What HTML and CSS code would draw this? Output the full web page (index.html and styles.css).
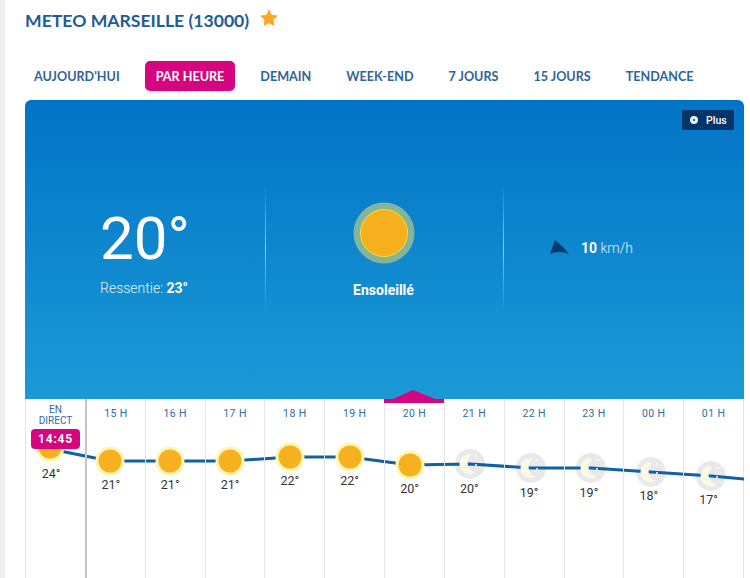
FILE: index.html

```html
<!DOCTYPE html>
<html lang="fr">
<head>
    <meta charset="UTF-8">
    <meta name="viewport" content="width=device-width, initial-scale=1.0">
    <title>Meteo Marseille (13000)</title>
    <link rel="stylesheet" href="styles.css">
</head>
<body>
    <div class="page">
        <div class="title-row">
            <h1>METEO MARSEILLE (13000)</h1>
            <svg class="star" width="18" height="18" viewBox="0 0 20 20"><path d="M10 1.200l2.700 5.700 6.200.8-4.500 4.300 1.100 6.200L10 15.200l-5.500 3 1.100-6.200L1.100 7.700l6.200-.8z" fill="#f9a825" stroke="#f9a825" stroke-width="1" stroke-linejoin="round"/></svg>
        </div>

        <nav class="tabs">
            <a class="tab">AUJOURD'HUI</a>
            <a class="tab active">PAR HEURE</a>
            <a class="tab">DEMAIN</a>
            <a class="tab">WEEK-END</a>
            <a class="tab">7 JOURS</a>
            <a class="tab">15 JOURS</a>
            <a class="tab">TENDANCE</a>
        </nav>

        <div class="card">
            <div class="hero">
                <a class="plus-btn"><span class="plus-dot"></span>Plus</a>
                <div class="hero-col temp-col">
                    <div class="temp-big">20°</div>
                    <div class="felt">Ressentie: <b>23°</b></div>
                </div>
                <div class="hero-col sky-col">
                    <svg width="62" height="62" viewBox="0 0 62 62">
                        <circle cx="31" cy="31" r="30.500" fill="#83b59c"/>
                        <circle cx="31" cy="31" r="23.500" fill="#f7b01d" stroke="#fbe21c" stroke-width="1"/>
                    </svg>
                    <div class="sky-label">Ensoleillé</div>
                </div>
                <div class="hero-col wind-col">
                    <svg width="20" height="15" viewBox="0 0 20 15"><path d="M0 14L5 0Q13 6 19 14Q9 10 0 14z" fill="#043c70"/></svg>
                    <div class="wind-text"><b>10</b> km/h</div>
                </div>
            </div>

            <div class="hours">
                <svg class="chart" width="719" height="179" viewBox="25 399 719 179">
                    <defs>
                        <g id="sun">
                            <circle r="14.500" fill="#fbf6b0"/>
                            <circle r="11.500" fill="#f5b120"/>
                        </g>
                        <g id="moon">
                            <path d="M2 -9.500A10 10 0 1 0 5 8.500A10 10 0 0 1 2 -9.500z" fill="#fdf9e3"/>
                            <circle cx="6" cy="-8" r="1" fill="white"/>
                            <circle cx="6" cy="1" r="1" fill="white"/>
                        </g>
                    </defs>
                    <g fill="#e9e9ea">
                        <circle cx="470" cy="464" r="15"/>
                        <circle cx="531" cy="468" r="15"/>
                        <circle cx="591" cy="468" r="15"/>
                        <circle cx="651" cy="472" r="15"/>
                        <circle cx="711" cy="476" r="15"/>
                    </g>
                    <polyline points="50,449 110,461 170,461 230,461 290,457 350,457 410,465 470,464 531,468 591,468 651,472 711,476 744,479" fill="none" stroke="#0f60a6" stroke-width="3"/>
                    <use href="#sun" x="50" y="447"/>
                    <use href="#sun" x="110" y="461"/>
                    <use href="#sun" x="170" y="461"/>
                    <use href="#sun" x="230" y="461"/>
                    <use href="#sun" x="290" y="457"/>
                    <use href="#sun" x="350" y="457"/>
                    <use href="#sun" x="410" y="465"/>
                    <use href="#moon" x="470" y="464"/>
                    <use href="#moon" x="531" y="468"/>
                    <use href="#moon" x="591" y="468"/>
                    <use href="#moon" x="651" y="472"/>
                    <use href="#moon" x="711" y="476"/>
                </svg>

                <div class="hour live">
                    <div class="hour-name">EN<br>DIRECT</div>
                    <div class="now-badge">14:45</div>
                    <div class="hour-temp" style="margin-top: 41px">24°</div>
                </div>
                <div class="hour"><div class="hour-name">15 H</div><div class="hour-temp" style="margin-top: 58px">21°</div></div>
                <div class="hour"><div class="hour-name">16 H</div><div class="hour-temp" style="margin-top: 58px">21°</div></div>
                <div class="hour"><div class="hour-name">17 H</div><div class="hour-temp" style="margin-top: 58px">21°</div></div>
                <div class="hour"><div class="hour-name">18 H</div><div class="hour-temp" style="margin-top: 54px">22°</div></div>
                <div class="hour"><div class="hour-name">19 H</div><div class="hour-temp" style="margin-top: 54px">22°</div></div>
                <div class="hour current">
                    <svg class="marker" width="60" height="14" viewBox="0 0 60 14"><path d="M0 14V10H9L29 1 51 10H60V14z" fill="#d6047f"/></svg>
                    <div class="hour-name">20 H</div><div class="hour-temp" style="margin-top: 62px">20°</div>
                </div>
                <div class="hour"><div class="hour-name">21 H</div><div class="hour-temp" style="margin-top: 62px">20°</div></div>
                <div class="hour"><div class="hour-name">22 H</div><div class="hour-temp" style="margin-top: 66px">19°</div></div>
                <div class="hour"><div class="hour-name">23 H</div><div class="hour-temp" style="margin-top: 66px">19°</div></div>
                <div class="hour"><div class="hour-name">00 H</div><div class="hour-temp" style="margin-top: 69px">18°</div></div>
                <div class="hour"><div class="hour-name">01 H</div><div class="hour-temp" style="margin-top: 73px">17°</div></div>
            </div>
        </div>
    </div>
</body>
</html>
```

FILE: styles.css

```css
html, body {
    margin: 0;
    padding: 0;
    height: 578px;
    overflow: hidden;
    background-color: white;
}

body {
    font-family: Roboto, Arial, sans-serif;
    border-left: 5px solid #eeeeee;
}

.page {
    padding-left: 20px;
    width: 719px;
}

.title-row {
    display: flex;
    align-items: center;
    gap: 11px;
    height: 40px;
}

h1 {
    margin: 0;
    font-family: Lato, Arial, sans-serif;
    font-size: 17.600px;
    font-weight: 700;
    color: #1f5c92;
}

.star {
    margin-top: -4px;
}

.tabs {
    display: flex;
    gap: 15px;
    margin-top: 21px;
    height: 30px;
    margin-left: -1px;
}

.tab {
    display: flex;
    align-items: center;
    padding: 0 10px;
    font-family: Lato, Arial, sans-serif;
    font-size: 12.600px;
    font-weight: 700;
    color: #2f6596;
    border-radius: 5px;
}

.tab.active {
    padding: 0 11px;
    background-color: #d6047f;
    color: white;
}

.card {
    margin-top: 9px;
}

.hero {
    position: relative;
    display: flex;
    height: 299px;
    border-radius: 6px 6px 0 0;
    background: linear-gradient(to bottom, #0274c6, #1b9ad6);
    color: white;
}

.plus-btn {
    position: absolute;
    top: 10px;
    right: 10px;
    display: flex;
    align-items: center;
    gap: 8px;
    width: 52px;
    height: 20px;
    box-sizing: border-box;
    padding-left: 8px;
    border-radius: 2px;
    background-color: #04356a;
    font-size: 10.500px;
    font-weight: 500;
}

.plus-dot {
    width: 8px;
    height: 8px;
    box-sizing: border-box;
    border-radius: 50%;
    border: 3px solid #e8eef5;
}

.hero-col {
    height: 125px;
    margin-top: 85px;
    box-sizing: border-box;
}

.temp-col {
    width: 241px;
    padding-left: 75px;
    border-right: 1px solid transparent;
    border-image: linear-gradient(to bottom, transparent, rgba(255, 255, 255, 0.55) 50%, transparent) 1;
}

.temp-big {
    margin-top: 21px;
    font-size: 60px;
    font-weight: 400;
    line-height: 66px;
}

.felt {
    margin-top: 8px;
    font-size: 14px;
    font-weight: 300;
    color: #e3f0fa;
}

.felt b {
    font-weight: 700;
    color: white;
}

.sky-col {
    width: 238px;
    display: flex;
    flex-direction: column;
    align-items: center;
    padding-top: 17px;
    padding-right: 2px;
    border-right: 1px solid transparent;
    border-image: linear-gradient(to bottom, transparent, rgba(255, 255, 255, 0.55) 50%, transparent) 1;
}

.sky-label {
    margin-top: 18px;
    font-size: 14px;
    font-weight: 700;
}

.wind-col {
    display: flex;
    align-items: center;
    gap: 11px;
    height: 125px;
    padding-left: 46px;
}

.wind-text {
    font-size: 14px;
    font-weight: 300;
    color: #e3f0fa;
}

.wind-text b {
    font-weight: 700;
    color: white;
}

.hours {
    position: relative;
    display: grid;
    grid-template-columns: 59px repeat(11, 1fr);
    height: 179px;
    border-left: 1px solid #dfe3ea;
    border-right: 1px solid #dfe3ea;
}

.chart {
    position: absolute;
    top: 0;
    left: -1px;
}

.hour {
    position: relative;
    border-left: 1px solid #e2e5ea;
    text-align: center;
}

.hour.live {
    border-left: none;
}

.hour.live + .hour {
    border-left: 2px solid #c4c4c4;
}

.hour-name {
    margin-top: 9px;
    height: 12px;
    font-size: 10.500px;
    line-height: 12px;
    font-weight: 400;
    letter-spacing: 0.4px;
    color: #2f6ba5;
}

.live .hour-name {
    margin-top: 5px;
    height: 22px;
    font-size: 10px;
    line-height: 11px;
    letter-spacing: 0;
}

.now-badge {
    position: absolute;
    top: 30px;
    left: 5px;
    width: 49px;
    height: 20px;
    border-radius: 4px;
    background-color: #d6047f;
    color: white;
    font-size: 12px;
    line-height: 20px;
    font-weight: 700;
    letter-spacing: 0.8px;
}

.hour-temp {
    position: relative;
    margin-right: 10px;
    font-size: 12.500px;
    line-height: 14px;
    color: #333333;
}

.live .hour-temp {
    margin-right: 9px;
}

.marker {
    position: absolute;
    top: -10px;
    left: -1px;
}
```
